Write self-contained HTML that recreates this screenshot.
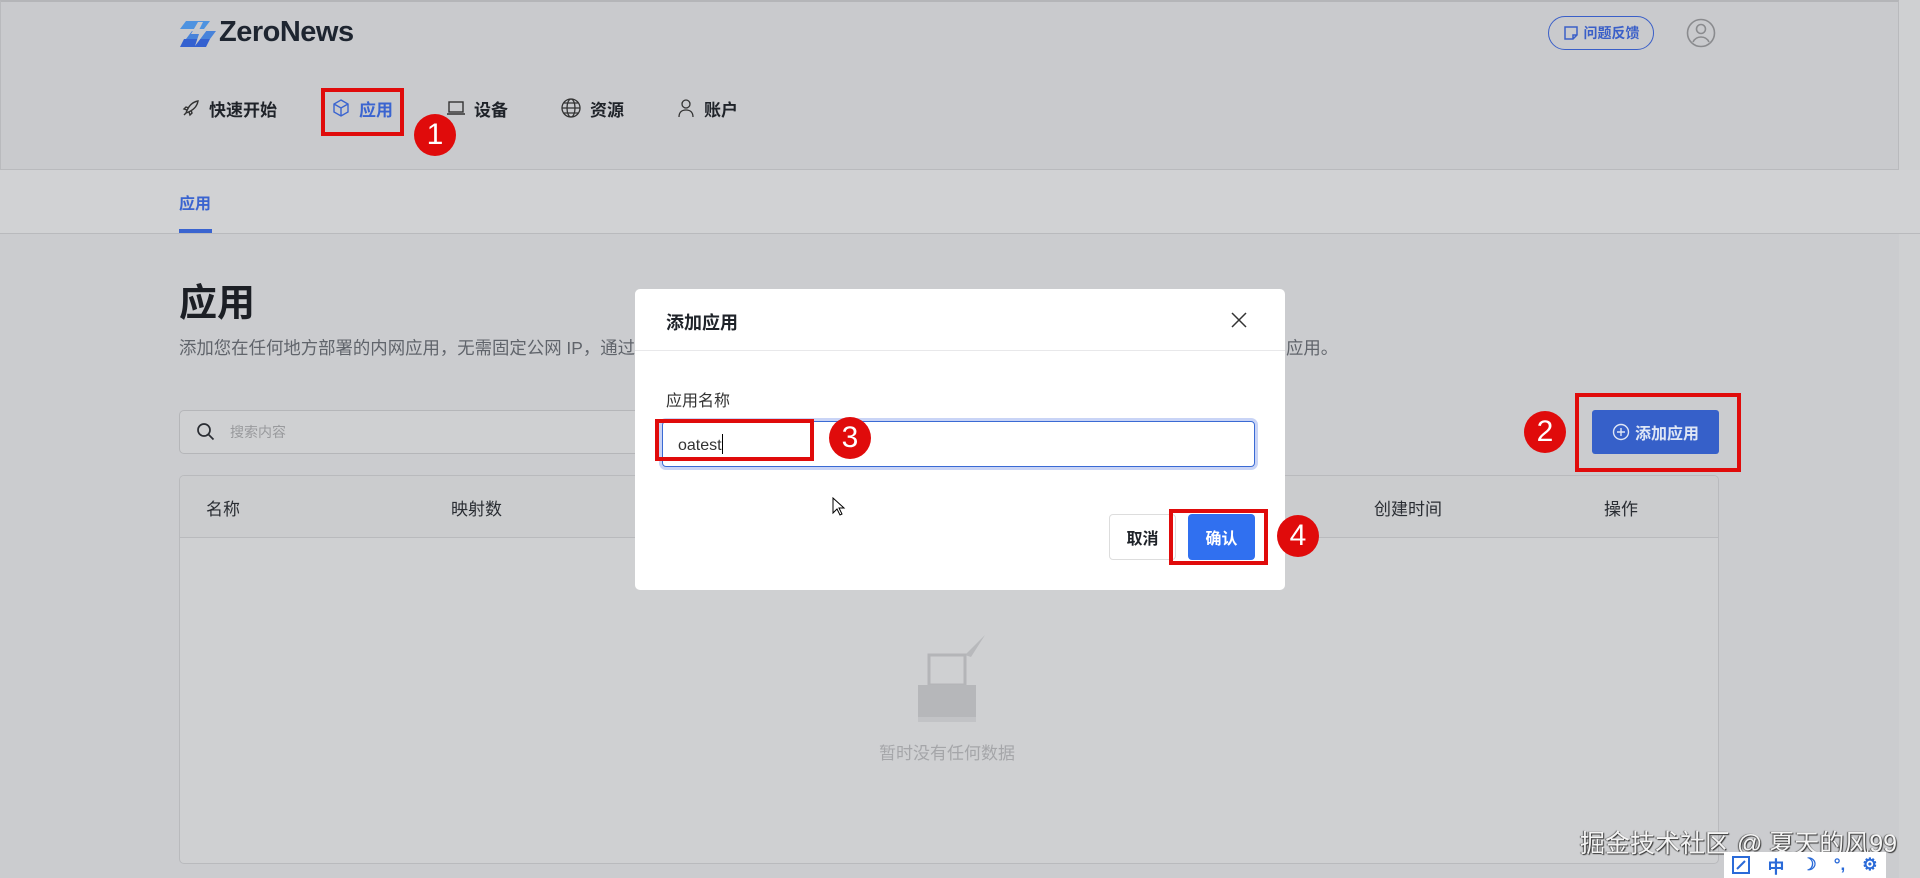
<!DOCTYPE html>
<html><head><meta charset="utf-8">
<style>
*{margin:0;padding:0;box-sizing:border-box}
body{width:1920px;height:878px;overflow:hidden;background:#cbcccf;font-family:"Liberation Sans","Noto Sans CJK SC",sans-serif;position:relative;color:#1f2329}
.abs{position:absolute}
.hdr{left:0;top:0;width:1899px;height:170px;background:#c9cacd;border:1px solid #b9babd;border-top:2px solid #b4b5b8}
.tabbar{left:0;top:170px;width:1920px;height:64px;background:#d1d2d4;border-bottom:1px solid #b9babd}
.nav{top:96px;font-size:17px;font-weight:bold;display:flex;align-items:center;gap:8px;color:#1f2329;height:24px}
.red{border:4px solid #e00b0b}
.num{width:42px;height:42px;border-radius:50%;background:#e00b0b;color:#fff;font-size:30px;display:flex;align-items:center;justify-content:center}
.th{top:495px;font-size:17px;color:#2a2d33}
</style></head><body>
<div class="abs hdr"></div>
<div class="abs" style="left:1899px;top:0;width:21px;height:878px;background:#cfd0d2"></div>
<!-- logo -->
<svg class="abs" style="left:178px;top:19px" width="40" height="30" viewBox="0 0 40 30">
<path d="M8 2h24l-6 8H2z" fill="#4e93e0"/><path d="M14 12h24l-6 8H8z" fill="#3a7bdc" opacity=".9"/><path d="M6 20h26l-4 8H2z" fill="#3461d0"/><path d="M20 3l-7 12h8l-4 12 12-16h-8l4-8z" fill="#c9cacd"/></svg>
<div class="abs" style="left:219px;top:16px;font-size:29px;font-weight:bold;color:#1e2530;letter-spacing:-0.5px">ZeroNews</div>
<!-- nav -->
<div class="abs nav" style="left:181px"><svg width="20" height="20" viewBox="0 0 20 20" fill="none" stroke="#333" stroke-width="1.4"><path d="M5 15c2-6 6-11 12-12-1 6-6 10-12 12z M5 15l-2 2 M8 10l-3-1-2 2 3 1 M10 12l1 3-2 2-1-3"/></svg>快速开始</div>
<div class="abs nav" style="left:331px;color:#3a64d0"><svg width="20" height="20" viewBox="0 0 20 20" fill="none" stroke="#3a64d0" stroke-width="1.4"><path d="M10 2l7 4v8l-7 4-7-4V6z M3 6l7 4 7-4 M10 10v8"/></svg>应用</div>
<div class="abs nav" style="left:446px"><svg width="20" height="20" viewBox="0 0 20 20" fill="none" stroke="#333" stroke-width="1.4"><rect x="3" y="4" width="14" height="10"/><path d="M1 16h18"/></svg>设备</div>
<div class="abs nav" style="left:560px"><svg width="22" height="22" viewBox="0 0 22 22" fill="none" stroke="#333" stroke-width="1.3"><circle cx="11" cy="11" r="9"/><ellipse cx="11" cy="11" rx="4" ry="9"/><path d="M2 11h18M4 6h14M4 16h14"/></svg>资源</div>
<div class="abs nav" style="left:676px"><svg width="20" height="22" viewBox="0 0 20 22" fill="none" stroke="#333" stroke-width="1.3"><circle cx="10" cy="7" r="4"/><path d="M3 20c0-5 3-7 7-7s7 2 7 7"/></svg>账户</div>
<div class="abs red" style="left:321px;top:88px;width:83px;height:48px"></div>
<div class="abs num" style="left:414px;top:114px">1</div>
<!-- feedback -->
<div class="abs" style="left:1548px;top:16px;width:106px;height:34px;border:1.5px solid #3a5fc8;border-radius:17px;display:flex;align-items:center;justify-content:center;gap:5px;color:#3a5fc8;font-size:14px;font-weight:bold"><svg width="16" height="16" viewBox="0 0 16 16" fill="none" stroke="#3a5fc8" stroke-width="1.5"><path d="M2 2h12v8l-4 4H2z M10 14v-4h4"/></svg>问题反馈</div>
<svg class="abs" style="left:1686px;top:18px" width="30" height="30" viewBox="0 0 30 30" fill="none" stroke="#8a8b8e" stroke-width="1.6"><circle cx="15" cy="15" r="13.5"/><circle cx="15" cy="11" r="4.5"/><path d="M7 24c2-4 5-5 8-5s6 1 8 5"/></svg>
<!-- tab -->
<div class="abs tabbar"></div>
<div class="abs" style="left:179px;top:190px;font-size:16px;font-weight:bold;color:#3a64d0">应用</div>
<div class="abs" style="left:179px;top:229px;width:33px;height:4px;background:#3a64d0"></div>
<!-- title -->
<div class="abs" style="left:179px;top:272px;font-size:38px;font-weight:bold;color:#1c1f25">应用</div>
<div class="abs" style="left:179px;top:335px;font-size:17.4px;color:#60646b;white-space:nowrap">添加您在任何地方部署的内网应用，无需固定公网 IP，通过</div>
<div class="abs" style="left:1286px;top:335px;font-size:17.4px;color:#60646b">应用。</div>
<!-- search -->
<div class="abs" style="left:179px;top:410px;width:700px;height:44px;border:1px solid #b5b6b9;border-radius:5px;background:#cfd0d2"></div>
<svg class="abs" style="left:196px;top:422px" width="20" height="20" viewBox="0 0 20 20" fill="none" stroke="#2a2d33" stroke-width="1.7"><circle cx="8" cy="8" r="6"/><path d="M12.5 12.5l5 5"/></svg>
<div class="abs" style="left:230px;top:422px;font-size:14px;color:#999a9d">搜索内容</div>
<!-- add button -->
<div class="abs" style="left:1592px;top:410px;width:127px;height:44px;background:#3660c9;border-radius:3px;color:#dfe6f5;font-size:16px;font-weight:bold;display:flex;align-items:center;justify-content:center;gap:5px"><svg width="18" height="18" viewBox="0 0 18 18" fill="none" stroke="#dfe6f5" stroke-width="1.4"><circle cx="9" cy="9" r="7.5"/><path d="M9 5v8M5 9h8"/></svg>添加应用</div>
<div class="abs red" style="left:1575px;top:393px;width:166px;height:79px"></div>
<div class="abs num" style="left:1524px;top:411px">2</div>
<!-- table -->
<div class="abs" style="left:179px;top:475px;width:1540px;height:389px;border:1px solid #b9babd;border-radius:5px;background:#cfd0d2;overflow:hidden"><div style="height:62px;border-bottom:1px solid #b9babd;background:#cbccce"></div></div>
<div class="abs th" style="left:206px">名称</div>
<div class="abs th" style="left:451px">映射数</div>
<div class="abs th" style="left:1374px">创建时间</div>
<div class="abs th" style="left:1604px">操作</div>
<svg class="abs" style="left:905px;top:630px" width="90" height="95" viewBox="0 0 90 95"><path d="M80 5l-20 20 6 2z" fill="#b8b9bc"/><rect x="24" y="25" width="36" height="30" fill="none" stroke="#b4b5b8" stroke-width="3"/><rect x="13" y="55" width="58" height="32" fill="#b6b7ba"/><rect x="13" y="87" width="58" height="5" fill="#c2c3c6"/></svg>
<div class="abs" style="left:879px;top:739px;font-size:17px;color:#a5a6a9">暂时没有任何数据</div>
<!-- dialog -->
<div class="abs" style="left:635px;top:289px;width:650px;height:301px;background:#fff;border-radius:5px">
<div style="position:absolute;left:31px;top:20px;font-size:18px;font-weight:bold;color:#1f2329">添加应用</div>
<svg style="position:absolute;left:596px;top:23px" width="16" height="16" viewBox="0 0 16 16" stroke="#333" stroke-width="1.5"><path d="M1 1l14 14M15 1L1 15"/></svg>
<div style="position:absolute;left:0;top:61px;width:650px;height:1px;background:#e8e8ea"></div>
<div style="position:absolute;left:31px;top:98px;font-size:16px;color:#333">应用名称</div>
<div style="position:absolute;left:27px;top:132px;width:593px;height:46px;border:1.5px solid #3a6ad4;border-radius:4px;box-shadow:0 0 0 3px #c9d4f6;font-size:16px;color:#333;padding:12px 0 0 15px">oatest<span style="display:inline-block;width:1px;height:20px;background:#000;vertical-align:-4px"></span></div>
<div style="position:absolute;left:474px;top:225px;width:67px;height:46px;border:1px solid #ddd;border-radius:4px;font-size:16px;font-weight:bold;color:#1f2329;display:flex;align-items:center;justify-content:center">取消</div>
<div style="position:absolute;left:553px;top:225px;width:67px;height:46px;background:#3070f0;border-radius:4px;font-size:16px;font-weight:bold;color:#fff;display:flex;align-items:center;justify-content:center">确认</div>
<svg style="position:absolute;left:197px;top:208px" width="14" height="20" viewBox="0 0 14 20" fill="#fff" stroke="#000" stroke-width="1"><path d="M1 1v15l4-4 3 6 2-1-3-6h5z"/></svg>
</div>
<div class="abs red" style="left:655px;top:419px;width:159px;height:42px"></div>
<div class="abs num" style="left:829px;top:417px">3</div>
<div class="abs red" style="left:1169px;top:509px;width:99px;height:56px"></div>
<div class="abs num" style="left:1277px;top:515px">4</div>
<!-- watermark -->
<div class="abs" style="left:1580px;top:824px;font-size:25px;color:#f4f4f4;text-shadow:1px 1px 1px #333,-1px 0 1px #555">掘金技术社区 @ 夏天的风99</div>
<div class="abs" style="left:1724px;top:852px;width:162px;height:26px;background:#fff;display:flex;align-items:center;justify-content:space-around;color:#2a6ad8;font-weight:bold;font-size:17px">
<svg width="18" height="18" viewBox="0 0 18 18" fill="none" stroke="#2a6ad8" stroke-width="2"><rect x="1" y="1" width="16" height="16"/><path d="M5 13l8-8"/></svg><span>中</span><span>☽</span><span>°,</span><span>⚙</span></div>
</body></html>
